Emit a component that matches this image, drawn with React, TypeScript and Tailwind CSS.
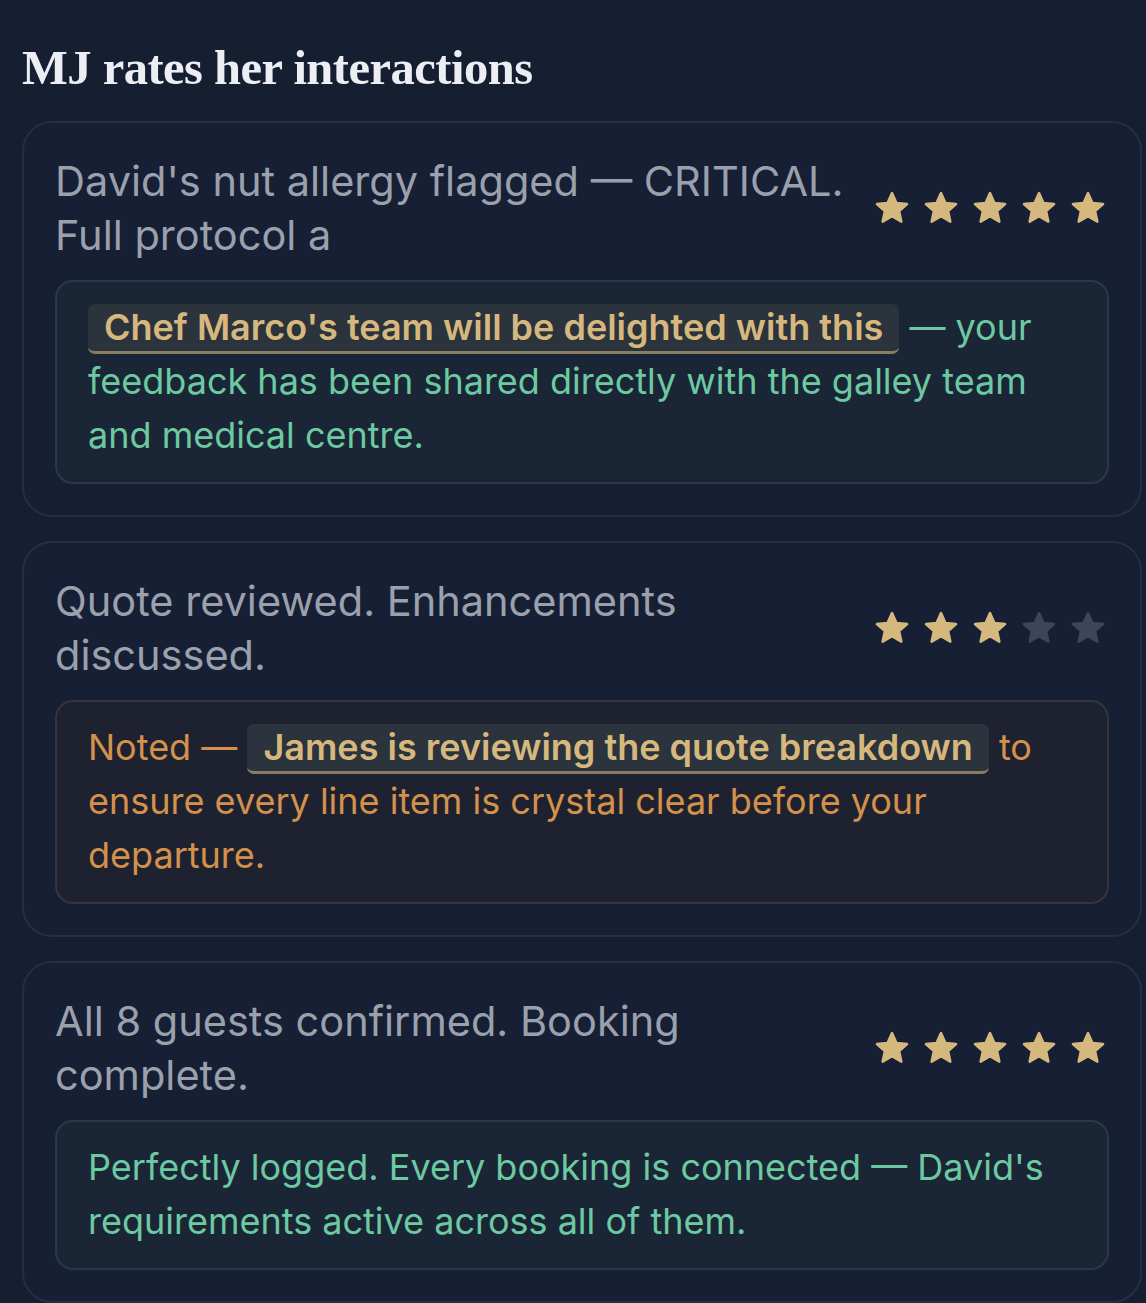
import React from "react";

type Tone = "green" | "amber";

type Rating = {
  title: string;
  stars: number;
  tone: Tone;
  before?: string;
  highlight?: string;
  after: string;
};

const ratings: Rating[] = [
  {
    title: "David's nut allergy flagged — CRITICAL. Full protocol a",
    stars: 5,
    tone: "green",
    highlight: "Chef Marco's team will be delighted with this",
    after: " — your feedback has been shared directly with the galley team and medical centre.",
  },
  {
    title: "Quote reviewed. Enhancements discussed.",
    stars: 3,
    tone: "amber",
    before: "Noted — ",
    highlight: "James is reviewing the quote breakdown",
    after: " to ensure every line item is crystal clear before your departure.",
  },
  {
    title: "All 8 guests confirmed. Booking complete.",
    stars: 5,
    tone: "green",
    after: "Perfectly logged. Every booking is connected — David's requirements active across all of them.",
  },
];

function Star({ filled }: { filled: boolean }) {
  return (
    <svg viewBox="0 0 24 24" className="h-[38px] w-[38px]">
      <path
        d="M12 2.6l2.8 6.2 6.7.7-5 4.5 1.4 6.6L12 17.2l-5.9 3.4 1.4-6.6-5-4.5 6.7-.7z"
        fill={filled ? "#d5b87d" : "#3d4658"}
        stroke={filled ? "#d5b87d" : "#3d4658"}
        strokeWidth={1.6}
        strokeLinejoin="round"
      />
    </svg>
  );
}

function RatingCard({ r }: { r: Rating }) {
  const box =
    r.tone === "green"
      ? "bg-[#1a2636] border-[#293a46] text-[#6dc9a1]"
      : "bg-[#1e2230] border-[#34363d] text-[#d3914b]";
  return (
    <div className="rounded-[30px] border-2 border-[#252f43] bg-[#161f33] px-[31px] pt-[31px] pb-[31px]">
      <div className="flex items-center">
        <p className="flex-1 pr-[24px] text-[41.5px] leading-[54px] text-[#9aa0ac]">{r.title}</p>
        <div className="flex gap-[11px] pr-[2px]">
          {[0, 1, 2, 3, 4].map((i) => (
            <Star key={i} filled={i < r.stars} />
          ))}
        </div>
      </div>
      <div className={`mt-[18px] rounded-[18px] border-2 px-[31px] pt-[18px] pb-[20px] text-[36px] leading-[54px] ${box}`}>
        {r.before}
        {r.highlight && (
          <span className="inline-block rounded-[7px] border-b-[3px] border-[#8b7c5f] bg-[#2b333d] px-[16px] leading-[47px] font-semibold text-[#d6b87e]">
            {r.highlight}
          </span>
        )}
        {r.after}
      </div>
    </div>
  );
}

export default function App() {
  return (
    <div
      className="min-h-screen bg-[#161e31] pl-[22px] pr-[4px] pt-[38px] pb-[10px]"
      style={{ fontFamily: "Inter, 'Noto Sans', sans-serif" }}
    >
      <h1
        className="mb-[23px] text-[48.5px] font-bold leading-[60px] tracking-[-0.5px] text-[#eceef3]"
        style={{ fontFamily: "'Liberation Serif', 'DejaVu Serif', serif" }}
      >
        MJ rates her interactions
      </h1>
      <div className="flex flex-col gap-[24px]">
        {ratings.map((r) => (
          <RatingCard key={r.title} r={r} />
        ))}
      </div>
    </div>
  );
}
